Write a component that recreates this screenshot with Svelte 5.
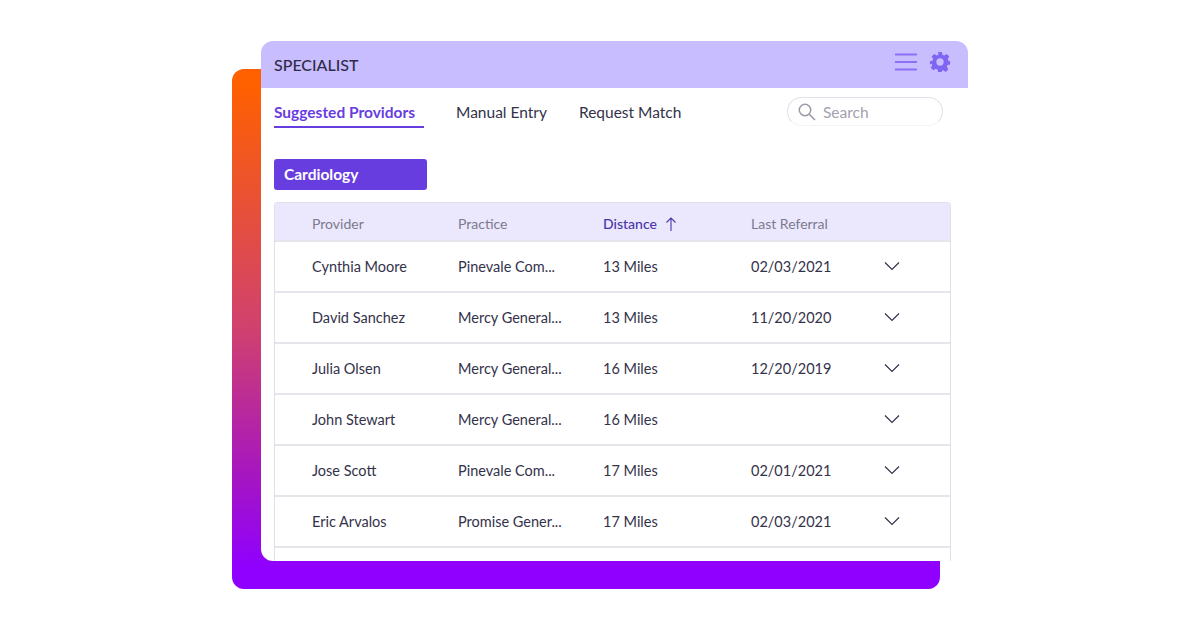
<script lang="ts">
  const columns = ['Provider', 'Practice', 'Distance', 'Last Referral'];
  const rows = [
    { name: 'Cynthia Moore', practice: 'Pinevale Com...', distance: '13 Miles', last: '02/03/2021' },
    { name: 'David Sanchez', practice: 'Mercy General...', distance: '13 Miles', last: '11/20/2020' },
    { name: 'Julia Olsen', practice: 'Mercy General...', distance: '16 Miles', last: '12/20/2019' },
    { name: 'John Stewart', practice: 'Mercy General...', distance: '16 Miles', last: '' },
    { name: 'Jose Scott', practice: 'Pinevale Com...', distance: '17 Miles', last: '02/01/2021' },
    { name: 'Eric Arvalos', practice: 'Promise Gener...', distance: '17 Miles', last: '02/03/2021' }
  ];
</script>

<div class="stage">
  <div class="backdrop"></div>
  <div class="card">
    <header class="topbar">
      <span class="title">SPECIALIST</span>
      <div class="top-icons">
        <svg width="22" height="18" viewBox="0 0 22 18" fill="none" stroke="#8b70f5" stroke-width="2">
          <path d="M0 1.500H22M0 9H22M0 16.500H22" />
        </svg>
        <svg class="gear" width="22" height="22" viewBox="0 0 24 24" fill="#8064f2">
          <path fill-rule="evenodd" d="M10 1h4l.7 3.100 1.900.8 2.700-1.700 2.800 2.800-1.700 2.700.8 1.900L23 11.300v3.400l-2.800.7-.8 1.900 1.700 2.700-2.800 2.800-2.700-1.700-1.900.8L14 23h-4l-.7-2.800-1.900-.8-2.700 1.700-2.800-2.800 1.700-2.700-.8-1.900L1 14.700v-3.400l2.800-.7.8-1.900L2.900 6 5.700 3.200l2.700 1.700 1.900-.8L10 1Zm2 7a4 4 0 1 0 0 8 4 4 0 0 0 0-8Z" />
        </svg>
      </div>
    </header>

    <nav class="tabs">
      <span class="tab active">Suggested Providors</span>
      <span class="tab manual">Manual Entry</span>
      <span class="tab">Request Match</span>
      <div class="search">
        <svg width="18" height="18" viewBox="0 0 18 18" fill="none" stroke="#9a98a6" stroke-width="1.500">
          <circle cx="7" cy="7" r="5.700" />
          <path d="M11.200 11.200L17 17" />
        </svg>
        <span>Search</span>
      </div>
    </nav>

    <div class="chip">Cardiology</div>

    <div class="table">
      <div class="row head">
        {#each columns as col}
          <span class:sorted={col === 'Distance'}>
            {col}
            {#if col === 'Distance'}
              <svg class="arrow" width="12" height="14" viewBox="0 0 12 14" fill="none" stroke="#4a35a8" stroke-width="1.100">
                <path d="M6 14V1M1.500 5.500L6 1l4.500 4.500" />
              </svg>
            {/if}
          </span>
        {/each}
      </div>
      {#each rows as row}
        <div class="row body">
          <span>{row.name}</span>
          <span>{row.practice}</span>
          <span>{row.distance}</span>
          <span>{row.last}</span>
          <svg class="chevron" width="16" height="10" viewBox="0 0 16 10" fill="none" stroke="#34324a" stroke-width="1.200">
            <path d="M1 1.500l7 7 7-7" />
          </svg>
        </div>
      {/each}
      <div class="tail"></div>
    </div>
  </div>
</div>

<style>
  :global(body) {
    margin: 0;
    background: #fff;
  }

  .stage {
    position: relative;
    width: 1200px;
    height: 630px;
    padding: 41px 0 0 261px;
    box-sizing: border-box;
    overflow: hidden;
    font-family: Lato, "Open Sans", sans-serif;
    color: #34324a;
  }

  .backdrop {
    position: absolute;
    left: 232px;
    top: 69px;
    width: 708px;
    height: 520px;
    border-radius: 12px;
    background: linear-gradient(180deg, #ff6000 0%, #ff6000 3%, #d0416f 50%, #a616c0 78%, #8f00ff 96%);
  }

  .card {
    position: relative;
    display: flex;
    flex-direction: column;
    width: 707px;
    height: 520px;
    background: #fff;
    border-radius: 12px 12px 0 12px;
  }

  .topbar {
    display: flex;
    align-items: center;
    justify-content: space-between;
    box-sizing: border-box;
    height: 47px;
    padding: 0 17px 0 13px;
    background: #c8bdff;
    border-radius: 12px 12px 0 0;
  }

  .title {
    font-size: 16px;
    font-weight: 500;
    color: #2f2b46;
  }

  .top-icons {
    display: flex;
    align-items: center;
    gap: 12px;
    margin-top: -6px;
  }

  .gear {
    margin-top: 1px;
  }

  .tabs {
    display: flex;
    align-items: flex-start;
    box-sizing: border-box;
    height: 71px;
    padding: 15px 25px 0 13px;
    font-size: 15.500px;
  }

  .tab {
    height: 23px;
    line-height: 18px;
    margin-top: 0;
    margin-right: 32px;
    white-space: nowrap;
  }

  .tab.active {
    box-sizing: border-box;
    width: 150px;
    height: 25px;
    font-weight: 700;
    color: #673de0;
    border-bottom: 2px solid #673de0;
  }

  .search {
    display: flex;
    align-items: center;
    gap: 7px;
    box-sizing: border-box;
    width: 156px;
    height: 29px;
    margin-left: auto;
    margin-top: -6px;
    padding-left: 10px;
    border: 1px solid #e2e1ea;
    border-bottom-color: #f4f4f8;
    border-radius: 15px;
    color: #a3a1b0;
    font-size: 15.500px;
  }

  .chip {
    box-sizing: border-box;
    width: 153px;
    height: 31px;
    margin-left: 13px;
    padding-left: 10px;
    line-height: 30px;
    border-radius: 3px;
    background: #673de0;
    color: #fff;
    font-size: 15.500px;
    font-weight: 700;
  }

  .table {
    display: flex;
    flex-direction: column;
    box-sizing: border-box;
    width: 677px;
    flex: 1;
    margin: 12px 0 0 13px;
    border: 1px solid #e1e0ea;
    border-bottom: 0;
    border-radius: 4px 4px 0 0;
    font-size: 14.500px;
  }

  .row {
    display: grid;
    grid-template-columns: 146px 145px 148px 133px 16px;
    align-items: center;
    box-sizing: border-box;
    padding-left: 37px;
    border-bottom: 2px solid #e6e5ec;
  }

  .row.head {
    height: 39px;
    background: #ebe8fe;
    color: #7c7a8c;
    font-size: 14px;
    border-radius: 3px 3px 0 0;
    padding-top: 3px;
  }

  .row.body {
    height: 51px;
  }

  .row.body:first-of-type {
    height: 50px;
  }

  .row.head + .row.body {
    height: 50.500px;
  }

  .sorted {
    color: #4a35a8;
    font-weight: 500;
  }

  .arrow {
    margin-left: 5px;
    vertical-align: -2px;
  }

  .chevron {
    display: block;
  }
</style>
